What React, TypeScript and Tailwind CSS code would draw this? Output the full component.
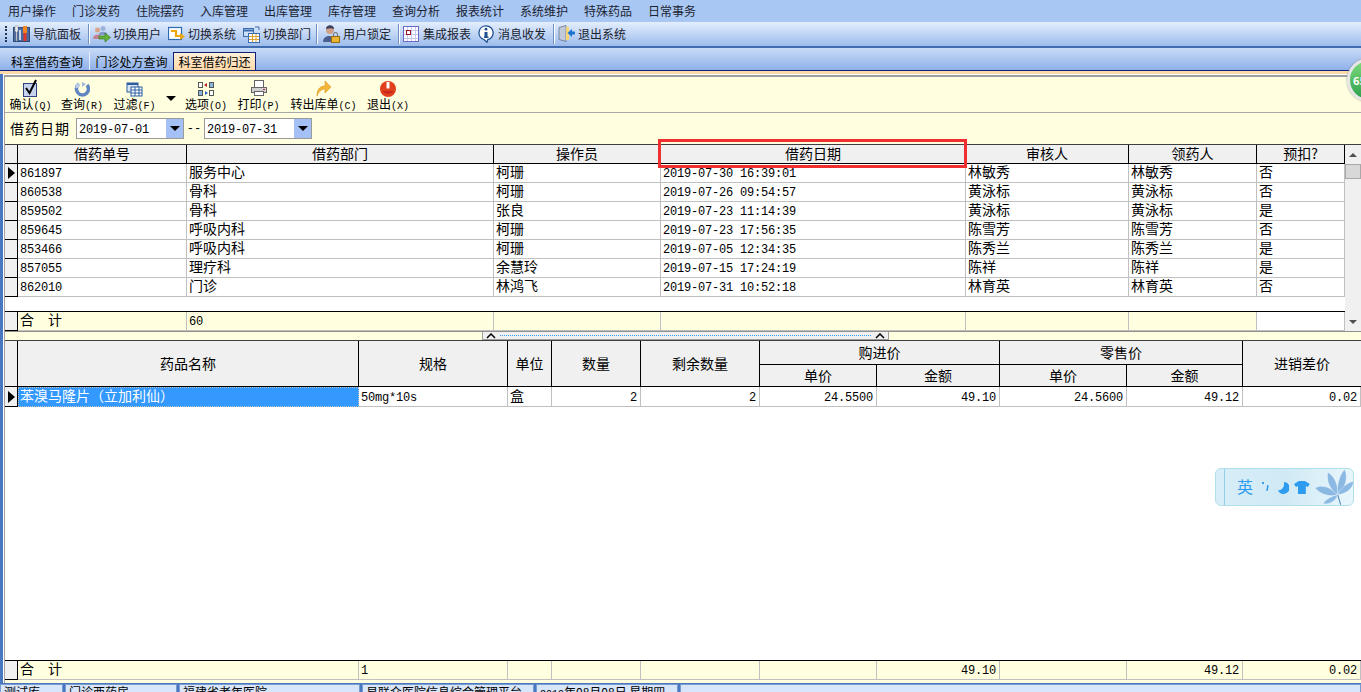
import { ReactNode } from "react"

const sans = "font-['Noto_Sans_CJK_SC','Noto_Sans',sans-serif]"
const mono = "font-['Liberation_Mono','DejaVu_Sans_Mono',monospace]"

const menus = ["用户操作", "门诊发药", "住院摆药", "入库管理", "出库管理", "库存管理", "查询分析", "报表统计", "系统维护", "特殊药品", "日常事务"]

const borrowRows = [
	["861897", "服务中心", "柯珊", "2019-07-30 16:39:01", "林敏秀", "林敏秀", "否"],
	["860538", "骨科", "柯珊", "2019-07-26 09:54:57", "黄泳标", "黄泳标", "否"],
	["859502", "骨科", "张良", "2019-07-23 11:14:39", "黄泳标", "黄泳标", "是"],
	["859645", "呼吸内科", "柯珊", "2019-07-23 17:56:35", "陈雪芳", "陈雪芳", "否"],
	["853466", "呼吸内科", "柯珊", "2019-07-05 12:34:35", "陈秀兰", "陈秀兰", "是"],
	["857055", "理疗科", "余慧玲", "2019-07-15 17:24:19", "陈祥", "陈祥", "是"],
	["862010", "门诊", "林鸿飞", "2019-07-31 10:52:18", "林育英", "林育英", "否"],
]

const grid1 = "grid grid-cols-[13px_169px_307px_167px_305px_163px_128px_88px]"
const grid2 = "grid grid-cols-[13px_341px_149px_44px_89px_119px_117px_123px_127px_116px_118px]"

function Num({ children }: { children: ReactNode }) {
	return <span className={`${mono} text-[12px] tracking-[-0.2px] leading-none pt-[2px]`}>{children}</span>
}

function Head({ children, className = "" }: { children?: ReactNode; className?: string }) {
	return (
		<div className={`flex items-center justify-center bg-[#f0f0f0] border-r border-b border-black pb-[2px] text-[14px] leading-none ${className}`}>
			{children}
		</div>
	)
}

function Cell({ children, num, right, className = "" }: { children?: ReactNode; num?: boolean; right?: boolean; className?: string }) {
	return (
		<div className={`flex items-center whitespace-nowrap border-r border-b border-[#c0c0c0] text-[14px] leading-none ${num ? "" : "pb-[4px]"} ${right ? "justify-end pr-[3px]" : "px-[2px]"} ${className}`}>
			{num ? <Num>{children}</Num> : children}
		</div>
	)
}

function Indicator({ active, className = "" }: { active?: boolean; className?: string }) {
	return (
		<div className={`flex items-center justify-center bg-[#f0f0f0] border-r border-b border-black ${className}`}>
			{active && <div className="w-0 h-0 border-y-[6px] border-y-transparent border-l-[7px] border-l-black" />}
		</div>
	)
}

function Sep({ className = "" }: { className?: string }) {
	return <div className={`w-[2px] h-[20px] bg-[#6f8fc0] border-r border-white ${className}`} />
}

function ToolLink({ icon, label, className = "" }: { icon: ReactNode; label: string; className?: string }) {
	return (
		<div className={`w-[68px] flex items-center text-[12px] text-[#1b2330] ${className}`}>
			<div className="w-[20px] shrink-0">{icon}</div>
			<span className="whitespace-nowrap">{label}</span>
		</div>
	)
}

function ActionButton({ icon, label, hot, className }: { icon: ReactNode; label: string; hot: string; className: string }) {
	return (
		<div className={`flex flex-col items-center ${className}`}>
			<div className="h-[20px] flex items-end">{icon}</div>
			<div className="text-[12px] leading-[14px] whitespace-nowrap">
				{label}<span className={`${mono} text-[10px]`}>({hot})</span>
			</div>
		</div>
	)
}

function DateBox({ value }: { value: string }) {
	return (
		<div className="w-[108px] h-[21px] border border-[#9a9a9a] bg-white flex items-center justify-between pl-[2px]">
			<Num>{value}</Num>
			<div className="w-[17px] h-full bg-[#a4c0f4] flex items-center justify-center">
				<div className="w-0 h-0 border-x-[5px] border-x-transparent border-t-[5px] border-t-black" />
			</div>
		</div>
	)
}

function Chevron() {
	return <svg width="10" height="6" viewBox="0 0 10 6"><path d="M1 5l4-4 4 4" fill="none" stroke="#000" strokeWidth="1.500" /></svg>
}

const NavIcon = (
	<svg width="17" height="18" viewBox="0 0 17 18">
		<rect x="0.500" y="2.500" width="16" height="14" fill="#4a6aa0" stroke="#2f4a78" />
		<path d="M2 1h3v5l-1 1v9H3V7L2 6z" fill="#eeeeee" stroke="#777" strokeWidth=".4" />
		<rect x="10" y="1" width="4" height="7" fill="#f5861f" />
		<rect x="10.500" y="8" width="3" height="8" fill="#e0352a" />
		<rect x="6" y="5" width="2" height="10" fill="#c8d4ea" />
	</svg>
)
const UserIcon = (
	<svg width="18" height="18" viewBox="0 0 18 18">
		<circle cx="4.500" cy="5" r="2.500" fill="#d9a58a" />
		<circle cx="10" cy="3.500" r="2.500" fill="#9fb2da" />
		<path d="M0 14c0-6 9-6 9 0z" fill="#c48090" />
		<path d="M6 9c0-3 8-3 8 0v1H6z" fill="#8098c8" />
		<path d="M6 11h6V8l5.500 4.500L12 17v-3H6z" fill="#63b336" stroke="#2f6b18" strokeWidth=".6" />
	</svg>
)
const SwitchIcon = (
	<svg width="17" height="17" viewBox="0 0 17 17">
		<rect x="0.500" y="1.500" width="13" height="12" fill="#fff" stroke="#2f6bb0" strokeWidth="1.200" />
		<path d="M3 5h5v5h4" fill="none" stroke="#eba70f" strokeWidth="2.200" />
		<path d="M12 7l5 3.500-5 3.500z" fill="#eba70f" />
	</svg>
)
const DeptIcon = (
	<svg width="17" height="17" viewBox="0 0 17 17">
		<rect x="0.500" y="2.500" width="10" height="8" fill="#cfe0f7" stroke="#3a6db0" />
		<path d="M1 4.500h9" stroke="#3a6db0" strokeWidth="2" />
		<rect x="5.500" y="7.500" width="11" height="9" fill="#fff" stroke="#3a6db0" />
		<path d="M6 10.500h10M6 13.500h10M9.500 8v8M13 8v8" stroke="#e0a030" />
		<path d="M12 1h4v3" fill="none" stroke="#3a6db0" />
	</svg>
)
const LockIcon = (
	<svg width="17" height="18" viewBox="0 0 17 18">
		<circle cx="7" cy="5" r="4" fill="#d0a088" />
		<path d="M3 4c0-5 8-5 8 0-3-1-5-1-8 0z" fill="#3a3f60" />
		<path d="M0 17c0-8 12-8 12 0z" fill="#4a5f90" />
		<rect x="8.500" y="11.500" width="8" height="6" fill="#eab532" stroke="#9a6b10" />
		<path d="M10.500 11V9.500a2 2 0 014 0V11" fill="none" stroke="#666" />
	</svg>
)
const ReportIcon = (
	<svg width="17" height="17" viewBox="0 0 17 17">
		<rect x="0.500" y="0.500" width="15" height="15" fill="#fff" stroke="#6a6ac8" />
		<path d="M1 4.500h14M1 8.500h14M1 12.500h14M4.500 1v14M8.500 1v14M12.500 1v14" stroke="#c6c6ee" />
		<rect x="3.500" y="4.500" width="4" height="4" fill="#fff" stroke="#a01020" />
	</svg>
)
const MessageIcon = (
	<svg width="17" height="18" viewBox="0 0 17 18">
		<path d="M8 .8a7 7 0 00-2 13.700L9 17.200l.8-2.600A7 7 0 008 .8z" fill="#fff" stroke="#1d4f91" strokeWidth="1.300" />
		<circle cx="8" cy="4.200" r="1.400" fill="#1d4f91" />
		<path d="M6.500 7h3v4.500h1V13h-4.500v-1.500h.5z" fill="#1d4f91" />
	</svg>
)
const ExitIcon = (
	<svg width="17" height="18" viewBox="0 0 17 18">
		<path d="M1 2.500l7-2v16l-7-2z" fill="#c0cadb" stroke="#66758c" strokeWidth=".8" />
		<path d="M8 2h3v13H8z" fill="#f3d576" />
		<path d="M9.500 8l4.500-4v2.500h3v3h-3V12z" fill="#1b73d0" />
	</svg>
)

export default function App() {
	return (
		<div className={`relative w-[1361px] h-[692px] overflow-hidden bg-white flex flex-col text-black ${sans}`}>
			{/* menu */}
			<div className="h-[22px] shrink-0 bg-[#a9c7f3] flex items-center pl-[8px] gap-[16px] text-[12px] text-[#1b2330]">
				{menus.map((m) => <span key={m} className="w-[48px] whitespace-nowrap">{m}</span>)}
			</div>

			{/* main toolbar */}
			<div className="h-[26px] shrink-0 bg-gradient-to-b from-[#e4eefd] to-[#9dbcec] border-b-2 border-[#3f6db0] flex items-center pl-[5px]">
				<div className="w-[2px] h-[16px] border-l-2 border-dotted border-[#22344f] mr-[6px]" />
				<ToolLink icon={NavIcon} label="导航面板" />
				<Sep className="ml-[7px] mr-[3px]" />
				<ToolLink icon={UserIcon} label="切换用户" />
				<ToolLink icon={SwitchIcon} label="切换系统" className="ml-[7px]" />
				<ToolLink icon={DeptIcon} label="切换部门" className="ml-[7px]" />
				<Sep className="ml-[5px] mr-[5px]" />
				<ToolLink icon={LockIcon} label="用户锁定" />
				<Sep className="ml-[7px] mr-[3px]" />
				<ToolLink icon={ReportIcon} label="集成报表" />
				<ToolLink icon={MessageIcon} label="消息收发" className="ml-[7px]" />
				<Sep className="ml-[7px] mr-[3px]" />
				<ToolLink icon={ExitIcon} label="退出系统" />
			</div>

			{/* tabs */}
			<div className="h-[23px] shrink-0 bg-gradient-to-b from-[#c9dcf8] to-[#8fb1e8] border-b border-[#10207a] flex items-end pl-[5px] text-[12px]">
				<div className="w-[85px] h-[18px] pt-[1px] flex items-center justify-center border-r border-[#e8f0fc]">科室借药查询</div>
				<div className="w-[83px] h-[18px] pt-[1px] flex items-center justify-center">门诊处方查询</div>
				<div className="w-[83px] h-[18px] pt-[1px] flex items-center justify-center bg-gradient-to-b from-[#fff0d8] to-[#ffd9a8] border border-b-0 border-[#10207a]">科室借药归还</div>
			</div>

			{/* body */}
			<div className="flex-1 min-h-0 bg-[#4a78c0] pl-[3px] flex flex-col">
				<div className="h-[3px] -ml-[3px] shrink-0 bg-[#ffd9a8]" />
				<div className="flex-1 min-h-0 border-l border-t border-white">
					<div className="h-full border-l border-t-2 border-[#a0a0a0] bg-[#ffffe0] flex flex-col">
						{/* action bar */}
						<div className="h-[36px] shrink-0 border-b border-[#a8a8a8] flex items-start">
							<ActionButton className="w-[51px]" label="确认" hot="Q" icon={
								<svg width="17" height="18" viewBox="0 0 17 18"><rect x="1.500" y="4.500" width="13" height="13" fill="#c6d2f0" stroke="#30407a" /><path d="M4 9l3.500 5L14 1" fill="none" stroke="#000" strokeWidth="2" /></svg>
							} />
							<ActionButton className="w-[52px]" label="查询" hot="R" icon={
								<svg width="16" height="16" viewBox="0 0 16 16"><path d="M5 3a6 6 0 108 1" fill="none" stroke="#5f86c0" strokeWidth="3.500" /><path d="M3 7a5 5 0 012-4" fill="none" stroke="#b8cce8" strokeWidth="3.500" /><path d="M8 1l4 2-4 3z" fill="#9fb7dc" /></svg>
							} />
							<ActionButton className="w-[53px]" label="过滤" hot="F" icon={
								<svg width="17" height="16" viewBox="0 0 17 16"><rect x="1" y="2" width="11" height="9" fill="#d8e6f8" stroke="#2d5fa0" /><rect x="5" y="6" width="11" height="9" fill="#fff" stroke="#2d5fa0" /><path d="M5 9h11M5 12h11M9 6v9M13 6v9" stroke="#2d5fa0" /><path d="M1 3h11" stroke="#2d5fa0" strokeWidth="2" /></svg>
							} />
							<div className="w-[20px] h-[26px] flex items-end justify-center pb-[2px]">
								<div className="w-0 h-0 border-x-[5px] border-x-transparent border-t-[5px] border-t-black" />
							</div>
							<ActionButton className="w-[50px]" label="选项" hot="O" icon={
								<svg width="16" height="16" viewBox="0 0 16 16"><rect x="0.500" y="1.500" width="4" height="5" fill="#fff" stroke="#555" /><rect x="11.500" y="1.500" width="4" height="5" fill="#8ab4e0" stroke="#555" /><rect x="0.500" y="9.500" width="4" height="5" fill="#8ab4e0" stroke="#555" /><rect x="11.500" y="9.500" width="4" height="5" fill="#fff" stroke="#555" /><path d="M6 4l3-2v4z" fill="#b02020" /><path d="M10 12L7 10v4z" fill="#2060c0" /></svg>
							} />
							<ActionButton className="w-[55px]" label="打印" hot="P" icon={
								<svg width="16" height="17" viewBox="0 0 16 17"><rect x="3.500" y="0.500" width="9" height="7" fill="#fff" stroke="#666" /><rect x="0.500" y="7.500" width="15" height="5" fill="#d0d0d0" stroke="#666" /><rect x="3.500" y="11.500" width="9" height="4" fill="#fff" stroke="#666" /><rect x="12" y="9" width="2" height="1" fill="#c03030" /></svg>
							} />
							<ActionButton className="w-[75px]" label="转出库单" hot="C" icon={
								<svg width="16" height="17" viewBox="0 0 16 17"><path d="M1 16C1 8 5 6 9 6V1l6 6-6 6V9C6 9 3 11 1 16z" fill="#f5b53a" stroke="#d08a10" strokeWidth=".5" /></svg>
							} />
							<ActionButton className="w-[54px]" label="退出" hot="X" icon={
								<svg width="16" height="17" viewBox="0 0 16 17"><circle cx="8" cy="9" r="8" fill="#e2401c" /><path d="M2 11a8 8 0 0012 0z" fill="#c8281a" /><path d="M8 2v6.500" stroke="#fff" strokeWidth="3" /></svg>
							} />
						</div>

						{/* date filter */}
						<div className="h-[31px] shrink-0 flex items-center pl-[5px] text-[14px]">
							<span className="w-[66px] tracking-[1px]">借药日期</span>
							<DateBox value="2019-07-01" />
							<span className={`${mono} text-[12px] w-[20px] text-center`}>--</span>
							<DateBox value="2019-07-31" />
						</div>

						{/* borrow table */}
						<div className="h-[188px] shrink-0 flex border-t border-[#404040] border-b border-b-[#909090] bg-white">
							<div className="w-[1340px] flex flex-col">
								<div className={`${grid1} h-[19px] shrink-0`}>
									<Indicator />
									{["借药单号", "借药部门", "操作员", "借药日期", "审核人", "领药人", "预扣?"].map((h) => <Head key={h}>{h}</Head>)}
								</div>
								{borrowRows.map((r, i) => (
									<div key={r[0]} className={`${grid1} h-[19px] shrink-0`}>
										<Indicator active={i === 0} />
										<Cell num>{r[0]}</Cell>
										<Cell>{r[1]}</Cell>
										<Cell>{r[2]}</Cell>
										<Cell num>{r[3]}</Cell>
										<Cell>{r[4]}</Cell>
										<Cell>{r[5]}</Cell>
										<Cell>{r[6]}</Cell>
									</div>
								))}
								<div className="flex-1 min-h-0" />
								<div className={`${grid1} h-[20px] shrink-0 border-t border-black bg-[#ffffe0]`}>
									<Indicator />
									<Cell>合　计</Cell>
									<Cell num>60</Cell>
									<Cell /><Cell /><Cell /><Cell />
									<Cell className="bg-white" />
								</div>
							</div>
							{/* scrollbar */}
							<div className="flex-1 bg-[#f0f0f0] flex flex-col items-center">
								<div className="h-[19px] flex items-center justify-center">
									<div className="w-0 h-0 border-x-[4px] border-x-transparent border-b-[4px] border-b-[#505050]" />
								</div>
								<div className="w-full h-[15px] bg-[#d8d8d8] border border-[#a8a8a8]" />
								<div className="flex-1" />
								<div className="h-[19px] flex items-center justify-center">
									<div className="w-0 h-0 border-x-[4px] border-x-transparent border-t-[4px] border-t-[#505050]" />
								</div>
							</div>
						</div>

						{/* splitter */}
						<div className="h-[8px] shrink-0 flex justify-start pl-[477px]">
							<div className="w-[407px] h-full bg-[#f0f0f0] border-x border-b border-[#a0a0a0] flex items-center gap-[4px] px-[3px]">
								<Chevron />
								<div className="flex-1 border-t border-dotted border-[#3399ff]" />
								<Chevron />
							</div>
						</div>

						{/* detail table */}
						<div className="flex-1 min-h-0 flex flex-col border-t border-[#404040] bg-white">
							<div className={`${grid2} grid-rows-[24px_22px] shrink-0`}>
								<Indicator className="row-span-2" />
								<Head className="row-span-2">药品名称</Head>
								<Head className="row-span-2">规格</Head>
								<Head className="row-span-2">单位</Head>
								<Head className="row-span-2">数量</Head>
								<Head className="row-span-2">剩余数量</Head>
								<Head className="col-span-2">购进价</Head>
								<Head className="col-span-2">零售价</Head>
								<Head className="row-span-2 border-r-0">进销差价</Head>
								<Head>单价</Head>
								<Head>金额</Head>
								<Head>单价</Head>
								<Head>金额</Head>
							</div>
							<div className={`${grid2} h-[19px] shrink-0`}>
								<Indicator active />
								<Cell className="bg-[#3399ff] text-white border border-dotted border-[#b87333] !px-[1px]">苯溴马隆片（立加利仙）</Cell>
								<Cell num>50mg*10s</Cell>
								<Cell>盒</Cell>
								<Cell num right>2</Cell>
								<Cell num right>2</Cell>
								<Cell num right>24.5500</Cell>
								<Cell num right>49.10</Cell>
								<Cell num right>24.5600</Cell>
								<Cell num right>49.12</Cell>
								<Cell num right>0.02</Cell>
							</div>
							<div className="flex-1 min-h-0" />
							<div className={`${grid2} h-[20px] shrink-0 border-t border-black bg-[#ffffe0]`}>
								<Indicator />
								<Cell>合　计</Cell>
								<Cell num>1</Cell>
								<Cell /><Cell /><Cell /><Cell />
								<Cell num right>49.10</Cell>
								<Cell />
								<Cell num right>49.12</Cell>
								<Cell num right>0.02</Cell>
							</div>
							<div className="h-[3px] shrink-0 bg-[#ffffe0]" />
						</div>
					</div>
				</div>
				{/* status bar */}
				<div className="h-[8px] -ml-[3px] mt-[1px] shrink-0 flex items-start gap-[2px] overflow-hidden bg-[#4a78c0] text-[12px] leading-[14px]">
					<div className="w-[63px] h-[14px] pl-[3px] bg-[#d8e6fb] border border-[#7a9bd0]">测试库</div>
					<div className="w-[112px] h-[14px] pl-[3px] bg-[#d8e6fb] border border-[#7a9bd0]">门诊西药房</div>
					<div className="w-[181px] h-[14px] pl-[3px] bg-[#d8e6fb] border border-[#7a9bd0]">福建省老年医院</div>
					<div className="w-[172px] h-[14px] pl-[3px] bg-[#d8e6fb] border border-[#7a9bd0]">易联众医院信息综合管理平台</div>
					<div className="w-[142px] h-[14px] pl-[3px] bg-[#d8e6fb] border border-[#7a9bd0]"><span className={`${mono} text-[10px]`}>2019</span>年08月08日 星期四</div>
					<div className="flex-1 h-[14px] bg-[#d8e6fb] border border-[#7a9bd0]" />
				</div>
			</div>

			{/* red highlight round the date column */}
			<div className="absolute left-[658px] top-[139px] w-[309px] h-[29px] border-[3px] border-[#f03030] pointer-events-none" />

			{/* floating green badge */}
			<div className="absolute left-[1347px] top-[58px] w-[44px] h-[44px] rounded-full bg-gradient-to-b from-[#7ddc7d] to-[#2a9f4a] border-[3px] border-[#e6e6e6] shadow-[0_0_2px_#808080] flex items-center pl-[3px] text-white text-[11px] font-bold">65</div>

			{/* input method widget */}
			<div className="absolute left-[1215px] top-[468px] w-[139px] h-[38px] rounded-[6px] border border-[#b0e0ea] bg-gradient-to-r from-[#d8eef8] via-[#d0eaf5] to-[#e8f6fb] flex items-center overflow-hidden">
				<div className="w-[9px] h-full border-r border-[#8fd0e4]" />
				<span className="ml-[12px] mb-[2px] text-[16px] text-[#2d9cf0] leading-none">英</span>
				<svg className="ml-[9px]" width="7" height="10" viewBox="0 0 7 10"><rect x="0" y="0" width="2" height="2" fill="#2d9cf0" /><path d="M6 3L5 9" stroke="#2d9cf0" strokeWidth="1.500" /></svg>
				<svg className="ml-[8px]" width="12" height="13" viewBox="0 0 12 13"><path d="M7 1a6 6 0 11-6 8c3 1 7-2 6-8z" fill="#2d9cf0" /></svg>
				<svg className="ml-[5px]" width="16" height="13" viewBox="0 0 16 13"><path d="M5 0h6l5 3-2 3-2-1v8H4V5L2 6 0 3z" fill="#2d9cf0" /></svg>
				<svg className="ml-[4px]" width="40" height="38" viewBox="0 0 40 38">
					<g fill="#6ea6dc" opacity=".75" stroke="#ffffff" strokeWidth=".4">
						<path d="M24 27C16 29 7 27 1 20c7-4 16-1 23 7z" />
						<path d="M24 27C17 22 12 14 14 4c7 4 11 14 10 23z" />
						<path d="M24 27C23 18 25 8 31 1c4 8 1 19-7 26z" />
						<path d="M24 27c3-7 9-12 16-14 0 7-7 13-16 14z" />
						<path d="M24 27c-6 1-12 4-15 9 7 1 13-3 15-9z" />
					</g>
					<path d="M24 27l3 10" stroke="#3f7fbd" />
				</svg>
			</div>
		</div>
	)
}
